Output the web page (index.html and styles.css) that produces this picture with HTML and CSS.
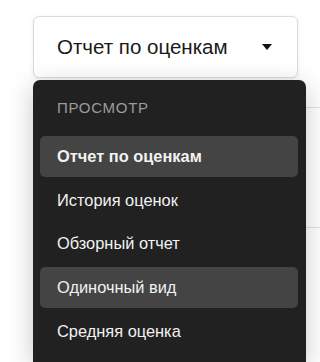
FILE: index.html
```html
<!DOCTYPE html>
<html lang="ru">
<head>
  <meta charset="UTF-8">
  <meta name="viewport" content="width=device-width, initial-scale=1.0">
  <title>Отчет по оценкам</title>
  <link rel="stylesheet" href="styles.css">
</head>
<body>
  <div class="page">
    <div class="select-wrap">
      <button class="select-btn" type="button">
        <span class="select-label">Отчет по оценкам</span>
        <span class="caret"></span>
      </button>

      <div class="menu">
        <div class="menu-title">ПРОСМОТР</div>
        <div class="menu-list">
          <div class="menu-item active">Отчет по оценкам</div>
          <div class="menu-item">История оценок</div>
          <div class="menu-item">Обзорный отчет</div>
          <div class="menu-item hover">Одиночный вид</div>
          <div class="menu-item">Средняя оценка</div>
        </div>
      </div>
    </div>

    <div class="rows">
      <div class="row"></div>
      <div class="row"></div>
    </div>
  </div>
</body>
</html>
```

FILE: styles.css
```css
body {
  margin: 0;
  font-family: 'Liberation Sans', Arial, sans-serif;
  background-color: #ffffff;
  height: 362px;
  overflow: hidden;
}

.page {
  padding: 16px 0 0 33px;
  position: relative;
}

.select-wrap {
  position: relative;
  width: 265px;
}

.select-btn {
  display: flex;
  align-items: center;
  justify-content: space-between;
  width: 265px;
  height: 62px;
  padding: 0 25px 0 23px;
  box-sizing: border-box;
  background: #fff;
  border: 1px solid #dcdcdc;
  border-radius: 6px;
  box-shadow: 0 1px 4px rgba(0, 0, 0, 0.08);
  font-family: inherit;
  font-size: 20.5px;
  color: #1a1a1a;
  cursor: pointer;
}

.caret {
  width: 0;
  height: 0;
  border-left: 5px solid transparent;
  border-right: 5px solid transparent;
  border-top: 6px solid #111;
}

.menu {
  position: absolute;
  top: 64px;
  left: 0;
  z-index: 2;
  width: 273px;
  height: 282px;
  padding: 18px 8px 0 7px;
  box-sizing: border-box;
  background-color: #212121;
  border-radius: 7px 7px 0 0;
  box-shadow: 0 6px 26px rgba(0, 0, 0, 0.22);
}

.menu-title {
  padding-left: 17px;
  font-size: 15px;
  line-height: 20px;
  letter-spacing: 0.7px;
  color: #9c9c9c;
  margin-bottom: 18px;
}

.menu-list {
  display: flex;
  flex-direction: column;
  gap: 2.67px;
}

.menu-item {
  height: 41px;
  line-height: 41px;
  padding-left: 17px;
  border-radius: 5px;
  font-size: 16.4px;
  color: #f2f2f2;
}

.menu-item.active {
  background-color: #444444;
  font-weight: bold;
}

.menu-item.hover {
  background-color: #444444;
}

.rows {
  margin: 29px 0 0 60px;
}

.row {
  height: 119px;
  border-top: 1px solid #e3e3e3;
}
```
